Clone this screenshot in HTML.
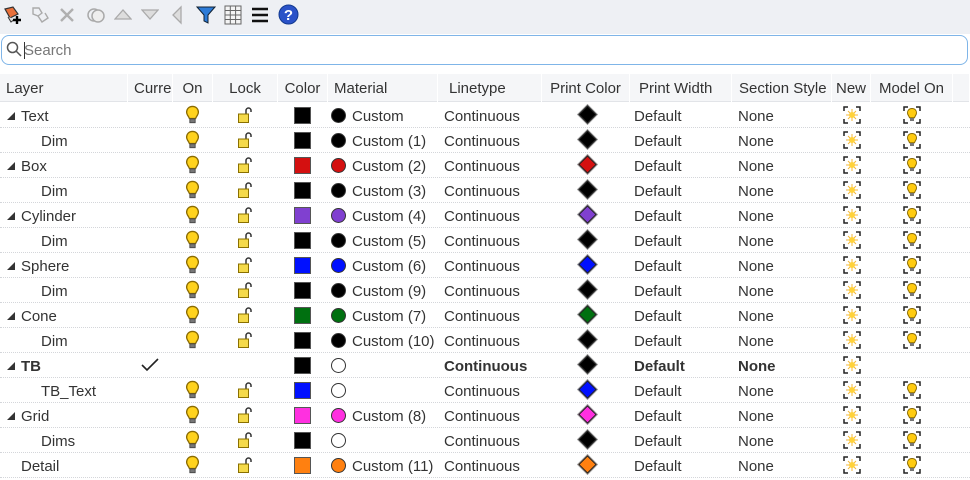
<!DOCTYPE html>
<html><head><meta charset="utf-8">
<style>
*{margin:0;padding:0;box-sizing:border-box}
body{width:970px;height:480px;overflow:hidden;background:#fff;font-family:"Liberation Sans",sans-serif;font-size:15px;color:#333;position:relative}
#tb{position:absolute;left:0;top:0;width:970px;height:34px;background:#eef0f4}
#sb{position:absolute;left:1px;top:35px;width:967px;height:30px;border:1.5px solid #7fb5e8;border-radius:8px;background:#fff}
#sb span{position:absolute;left:22px;top:6px;color:#777;font-size:15px}
#sb i{position:absolute;left:22px;top:6px;width:1px;height:17px;background:#333}
#hdr{position:absolute;left:0;top:74px;width:970px;height:28px;background:#f5f6f8;border-bottom:1px solid #e2e4e8}
.h{position:absolute;top:0;height:28px;line-height:29px;border-right:1px solid #fff;padding-left:6px;white-space:nowrap;overflow:hidden}
.c{text-align:center;padding-left:0}
.r{position:absolute;left:0;width:970px;height:25px;border-bottom:1px dotted #d4d6da}
.r>*{position:absolute}
.t{top:5px;white-space:nowrap}
.b{font-weight:bold}
.ar{left:7px;top:9px;width:0;height:0;border-left:8px solid transparent;border-bottom:8px solid #333}
.sw{left:294px;top:4px;width:17px;height:17px;border:1px solid #555}
.mc{left:331px;top:5px;width:15px;height:15px;border-radius:50%;border:1px solid #333}
.dm{left:581px;top:5px;width:13px;height:13px;transform:rotate(45deg);border:1px solid #222;box-shadow:0 0 0 1px #999}
svg.i{top:3px}
svg.bl{top:2px}
</style></head><body>
<svg width="0" height="0" style="position:absolute">
<defs>
<symbol id="bulb" viewBox="0 0 14 18"><path d="M7 1C3.5 1 1.5 3.5 1.5 6.3c0 2.5 2 4 2.6 6h5.8c.6-2 2.6-3.5 2.6-6C12.5 3.5 10.5 1 7 1z" fill="#ffd21c" stroke="#8a6a00" stroke-width="1.2"/><rect x="4.5" y="12.6" width="5" height="3.6" fill="#777" stroke="#444" stroke-width=".8"/></symbol>
<symbol id="lock" viewBox="0 0 16 18"><path d="M9 8V4.5a2.5 2.5 0 0 1 5 0V6" fill="none" stroke="#333" stroke-width="1.5"/><rect x="1.5" y="8" width="10" height="8.5" fill="#f5da4a" stroke="#8a7000" stroke-width="1"/></symbol>
<symbol id="new" viewBox="0 0 18 18"><path d="M1 5V1h4M13 1h4v4M17 13v4h-4M5 17H1v-4" fill="none" stroke="#222" stroke-width="1.5"/><path d="M9 3v12M3 9h12M5 5l8 8M13 5l-8 8" stroke="#f3b73a" stroke-width="1"/><circle cx="9" cy="9" r="3" fill="#ffd23a"/></symbol>
<symbol id="mb" viewBox="0 0 18 18"><path d="M1 5V1h4M13 1h4v4M17 13v4h-4M5 17H1v-4" fill="none" stroke="#222" stroke-width="1.5"/><path d="M9 2.5C6 2.5 4.5 4.5 4.5 7c0 2 1.6 3 2 4.8h5c.4-1.8 2-2.8 2-4.8 0-2.5-1.5-4.5-4.5-4.5z" fill="#ffcb10" stroke="#8a6a00"/><rect x="7" y="12" width="4" height="3" fill="#777"/></symbol>
</defs></svg>

<div id="tb">
<svg style="position:absolute;left:3px;top:5px" width="20" height="20" viewBox="0 0 20 20"><path d="M2 4l8-2 5 7-8 4z" fill="#e9703a" stroke="#333" stroke-width="1.2"/><path d="M5 12l3 5 4-3" fill="#ddd" stroke="#333"/><path d="M14 11v8M10 15h8" stroke="#000" stroke-width="2.4"/></svg>
<svg style="position:absolute;left:30px;top:5px" width="20" height="20" viewBox="0 0 20 20" fill="none" stroke="#aaa" stroke-width="1.4"><path d="M3 3l6 0 3 5-4 3-5-2z"/><path d="M8 11l4 6 6-4-3-5"/></svg>
<svg style="position:absolute;left:58px;top:6px" width="18" height="18" viewBox="0 0 18 18" stroke="#b0b0b0" stroke-width="2.4"><path d="M3 3l12 12M15 3L3 15"/></svg>
<svg style="position:absolute;left:86px;top:5px" width="20" height="20" viewBox="0 0 20 20" fill="none" stroke="#aaa" stroke-width="1.5"><circle cx="8" cy="10" r="6"/><circle cx="12" cy="11" r="6" fill="#eee"/></svg>
<svg style="position:absolute;left:114px;top:8px" width="18" height="12" viewBox="0 0 18 12"><path d="M1 11L9 2l8 9z" fill="#ddd" stroke="#aaa" stroke-width="1.3"/></svg>
<svg style="position:absolute;left:141px;top:9px" width="18" height="12" viewBox="0 0 18 12"><path d="M1 1l8 9 8-9z" fill="#ddd" stroke="#aaa" stroke-width="1.3"/></svg>
<svg style="position:absolute;left:171px;top:5px" width="12" height="20" viewBox="0 0 12 20"><path d="M10 2L2 10l8 8z" fill="#ddd" stroke="#aaa" stroke-width="1.3"/></svg>
<svg style="position:absolute;left:196px;top:5px" width="20" height="20" viewBox="0 0 20 20"><path d="M1 2h18l-7 8v8l-4-2v-6z" fill="#2c7bd8" stroke="#123" stroke-width="1"/></svg>
<svg style="position:absolute;left:224px;top:5px" width="18" height="20" viewBox="0 0 18 20" fill="#f4f4f4" stroke="#666" stroke-width="1"><rect x="1" y="1" width="16" height="18"/><path d="M1 5.5h16M1 10h16M1 14.5h16M6.3 1v18M11.6 1v18"/></svg>
<svg style="position:absolute;left:251px;top:6px" width="18" height="18" viewBox="0 0 18 18" stroke="#111" stroke-width="2.4"><path d="M1 3h16M1 9h16M1 15h16"/></svg>
<svg style="position:absolute;left:278px;top:4px" width="21" height="21" viewBox="0 0 21 21"><circle cx="10.5" cy="10.5" r="9.5" fill="#2a52c8" stroke="#123a90"/><text x="10.5" y="16" font-family="Liberation Sans" font-weight="bold" font-size="15" fill="#fff" text-anchor="middle">?</text></svg>
</div>

<div id="sb"><svg style="position:absolute;left:4px;top:5px" width="16" height="16" viewBox="0 0 16 16" fill="none" stroke="#555" stroke-width="1.5"><circle cx="6.5" cy="6.5" r="5"/><path d="M10 10l5 5"/></svg><i></i><span>Search</span></div>

<div id="hdr">
<div class="h" style="left:0;width:128px">Layer</div>
<div class="h" style="left:128px;width:45px">Current</div>
<div class="h c" style="left:173px;width:40px">On</div>
<div class="h c" style="left:213px;width:65px">Lock</div>
<div class="h c" style="left:278px;width:50px">Color</div>
<div class="h" style="left:328px;width:110px">Material</div>
<div class="h" style="left:438px;width:104px;padding-left:11px">Linetype</div>
<div class="h c" style="left:542px;width:88px">Print Color</div>
<div class="h" style="left:630px;width:102px;padding-left:9px">Print Width</div>
<div class="h" style="left:732px;width:100px;padding-left:7px">Section Style</div>
<div class="h c" style="left:832px;width:39px">New</div>
<div class="h c" style="left:871px;width:82px">Model On</div>
<div class="h" style="left:953px;width:17px"></div>
</div>

<div class="r" style="top:103px"><i class="ar"></i><span class="t" style="left:21px">Text</span><svg class="bl" style="left:185px" width="15" height="20"><use href="#bulb"/></svg><svg class="i" style="left:237px" width="16" height="18"><use href="#lock"/></svg><i class="sw" style="background:#000"></i><i class="mc" style="background:#000"></i><span class="t" style="left:352px">Custom</span><span class="t" style="left:444px">Continuous</span><i class="dm" style="background:#000"></i><span class="t" style="left:634px">Default</span><span class="t" style="left:738px">None</span><svg class="i" style="left:843px" width="18" height="18"><use href="#new"/></svg><svg class="i" style="left:903px" width="18" height="18"><use href="#mb"/></svg></div>
<div class="r" style="top:128px"><span class="t" style="left:41px">Dim</span><svg class="bl" style="left:185px" width="15" height="20"><use href="#bulb"/></svg><svg class="i" style="left:237px" width="16" height="18"><use href="#lock"/></svg><i class="sw" style="background:#000"></i><i class="mc" style="background:#000"></i><span class="t" style="left:352px">Custom (1)</span><span class="t" style="left:444px">Continuous</span><i class="dm" style="background:#000"></i><span class="t" style="left:634px">Default</span><span class="t" style="left:738px">None</span><svg class="i" style="left:843px" width="18" height="18"><use href="#new"/></svg><svg class="i" style="left:903px" width="18" height="18"><use href="#mb"/></svg></div>
<div class="r" style="top:153px"><i class="ar"></i><span class="t" style="left:21px">Box</span><svg class="bl" style="left:185px" width="15" height="20"><use href="#bulb"/></svg><svg class="i" style="left:237px" width="16" height="18"><use href="#lock"/></svg><i class="sw" style="background:#d41010"></i><i class="mc" style="background:#d41010"></i><span class="t" style="left:352px">Custom (2)</span><span class="t" style="left:444px">Continuous</span><i class="dm" style="background:#d41010"></i><span class="t" style="left:634px">Default</span><span class="t" style="left:738px">None</span><svg class="i" style="left:843px" width="18" height="18"><use href="#new"/></svg><svg class="i" style="left:903px" width="18" height="18"><use href="#mb"/></svg></div>
<div class="r" style="top:178px"><span class="t" style="left:41px">Dim</span><svg class="bl" style="left:185px" width="15" height="20"><use href="#bulb"/></svg><svg class="i" style="left:237px" width="16" height="18"><use href="#lock"/></svg><i class="sw" style="background:#000"></i><i class="mc" style="background:#000"></i><span class="t" style="left:352px">Custom (3)</span><span class="t" style="left:444px">Continuous</span><i class="dm" style="background:#000"></i><span class="t" style="left:634px">Default</span><span class="t" style="left:738px">None</span><svg class="i" style="left:843px" width="18" height="18"><use href="#new"/></svg><svg class="i" style="left:903px" width="18" height="18"><use href="#mb"/></svg></div>
<div class="r" style="top:203px"><i class="ar"></i><span class="t" style="left:21px">Cylinder</span><svg class="bl" style="left:185px" width="15" height="20"><use href="#bulb"/></svg><svg class="i" style="left:237px" width="16" height="18"><use href="#lock"/></svg><i class="sw" style="background:#8040d0"></i><i class="mc" style="background:#8040d0"></i><span class="t" style="left:352px">Custom (4)</span><span class="t" style="left:444px">Continuous</span><i class="dm" style="background:#8040d0"></i><span class="t" style="left:634px">Default</span><span class="t" style="left:738px">None</span><svg class="i" style="left:843px" width="18" height="18"><use href="#new"/></svg><svg class="i" style="left:903px" width="18" height="18"><use href="#mb"/></svg></div>
<div class="r" style="top:228px"><span class="t" style="left:41px">Dim</span><svg class="bl" style="left:185px" width="15" height="20"><use href="#bulb"/></svg><svg class="i" style="left:237px" width="16" height="18"><use href="#lock"/></svg><i class="sw" style="background:#000"></i><i class="mc" style="background:#000"></i><span class="t" style="left:352px">Custom (5)</span><span class="t" style="left:444px">Continuous</span><i class="dm" style="background:#000"></i><span class="t" style="left:634px">Default</span><span class="t" style="left:738px">None</span><svg class="i" style="left:843px" width="18" height="18"><use href="#new"/></svg><svg class="i" style="left:903px" width="18" height="18"><use href="#mb"/></svg></div>
<div class="r" style="top:253px"><i class="ar"></i><span class="t" style="left:21px">Sphere</span><svg class="bl" style="left:185px" width="15" height="20"><use href="#bulb"/></svg><svg class="i" style="left:237px" width="16" height="18"><use href="#lock"/></svg><i class="sw" style="background:#0010ff"></i><i class="mc" style="background:#0010ff"></i><span class="t" style="left:352px">Custom (6)</span><span class="t" style="left:444px">Continuous</span><i class="dm" style="background:#0010ff"></i><span class="t" style="left:634px">Default</span><span class="t" style="left:738px">None</span><svg class="i" style="left:843px" width="18" height="18"><use href="#new"/></svg><svg class="i" style="left:903px" width="18" height="18"><use href="#mb"/></svg></div>
<div class="r" style="top:278px"><span class="t" style="left:41px">Dim</span><svg class="bl" style="left:185px" width="15" height="20"><use href="#bulb"/></svg><svg class="i" style="left:237px" width="16" height="18"><use href="#lock"/></svg><i class="sw" style="background:#000"></i><i class="mc" style="background:#000"></i><span class="t" style="left:352px">Custom (9)</span><span class="t" style="left:444px">Continuous</span><i class="dm" style="background:#000"></i><span class="t" style="left:634px">Default</span><span class="t" style="left:738px">None</span><svg class="i" style="left:843px" width="18" height="18"><use href="#new"/></svg><svg class="i" style="left:903px" width="18" height="18"><use href="#mb"/></svg></div>
<div class="r" style="top:303px"><i class="ar"></i><span class="t" style="left:21px">Cone</span><svg class="bl" style="left:185px" width="15" height="20"><use href="#bulb"/></svg><svg class="i" style="left:237px" width="16" height="18"><use href="#lock"/></svg><i class="sw" style="background:#007010"></i><i class="mc" style="background:#007010"></i><span class="t" style="left:352px">Custom (7)</span><span class="t" style="left:444px">Continuous</span><i class="dm" style="background:#007010"></i><span class="t" style="left:634px">Default</span><span class="t" style="left:738px">None</span><svg class="i" style="left:843px" width="18" height="18"><use href="#new"/></svg><svg class="i" style="left:903px" width="18" height="18"><use href="#mb"/></svg></div>
<div class="r" style="top:328px"><span class="t" style="left:41px">Dim</span><svg class="bl" style="left:185px" width="15" height="20"><use href="#bulb"/></svg><svg class="i" style="left:237px" width="16" height="18"><use href="#lock"/></svg><i class="sw" style="background:#000"></i><i class="mc" style="background:#000"></i><span class="t" style="left:352px">Custom (10)</span><span class="t" style="left:444px">Continuous</span><i class="dm" style="background:#000"></i><span class="t" style="left:634px">Default</span><span class="t" style="left:738px">None</span><svg class="i" style="left:843px" width="18" height="18"><use href="#new"/></svg><svg class="i" style="left:903px" width="18" height="18"><use href="#mb"/></svg></div>
<div class="r" style="top:353px"><i class="ar"></i><span class="t b" style="left:21px">TB</span><svg style="left:141px;top:5px" width="18" height="14" viewBox="0 0 18 14" fill="none" stroke="#222" stroke-width="1.6"><path d="M1 7l5 5L17 1"/></svg><i class="sw" style="background:#000"></i><i class="mc" style="background:#fff"></i><span class="t b" style="left:444px">Continuous</span><i class="dm" style="background:#000"></i><span class="t b" style="left:634px">Default</span><span class="t b" style="left:738px">None</span><svg class="i" style="left:843px" width="18" height="18"><use href="#new"/></svg></div>
<div class="r" style="top:378px"><span class="t" style="left:41px">TB_Text</span><svg class="bl" style="left:185px" width="15" height="20"><use href="#bulb"/></svg><svg class="i" style="left:237px" width="16" height="18"><use href="#lock"/></svg><i class="sw" style="background:#0010ff"></i><i class="mc" style="background:#fff"></i><span class="t" style="left:444px">Continuous</span><i class="dm" style="background:#0010ff"></i><span class="t" style="left:634px">Default</span><span class="t" style="left:738px">None</span><svg class="i" style="left:843px" width="18" height="18"><use href="#new"/></svg><svg class="i" style="left:903px" width="18" height="18"><use href="#mb"/></svg></div>
<div class="r" style="top:403px"><i class="ar"></i><span class="t" style="left:21px">Grid</span><svg class="bl" style="left:185px" width="15" height="20"><use href="#bulb"/></svg><svg class="i" style="left:237px" width="16" height="18"><use href="#lock"/></svg><i class="sw" style="background:#ff30e0"></i><i class="mc" style="background:#ff30e0"></i><span class="t" style="left:352px">Custom (8)</span><span class="t" style="left:444px">Continuous</span><i class="dm" style="background:#ff30e0"></i><span class="t" style="left:634px">Default</span><span class="t" style="left:738px">None</span><svg class="i" style="left:843px" width="18" height="18"><use href="#new"/></svg><svg class="i" style="left:903px" width="18" height="18"><use href="#mb"/></svg></div>
<div class="r" style="top:428px"><span class="t" style="left:41px">Dims</span><svg class="bl" style="left:185px" width="15" height="20"><use href="#bulb"/></svg><svg class="i" style="left:237px" width="16" height="18"><use href="#lock"/></svg><i class="sw" style="background:#000"></i><i class="mc" style="background:#fff"></i><span class="t" style="left:444px">Continuous</span><i class="dm" style="background:#000"></i><span class="t" style="left:634px">Default</span><span class="t" style="left:738px">None</span><svg class="i" style="left:843px" width="18" height="18"><use href="#new"/></svg><svg class="i" style="left:903px" width="18" height="18"><use href="#mb"/></svg></div>
<div class="r" style="top:453px"><span class="t" style="left:21px">Detail</span><svg class="bl" style="left:185px" width="15" height="20"><use href="#bulb"/></svg><svg class="i" style="left:237px" width="16" height="18"><use href="#lock"/></svg><i class="sw" style="background:#ff8010"></i><i class="mc" style="background:#ff8010"></i><span class="t" style="left:352px">Custom (11)</span><span class="t" style="left:444px">Continuous</span><i class="dm" style="background:#ff8010"></i><span class="t" style="left:634px">Default</span><span class="t" style="left:738px">None</span><svg class="i" style="left:843px" width="18" height="18"><use href="#new"/></svg><svg class="i" style="left:903px" width="18" height="18"><use href="#mb"/></svg></div>
</body></html>
